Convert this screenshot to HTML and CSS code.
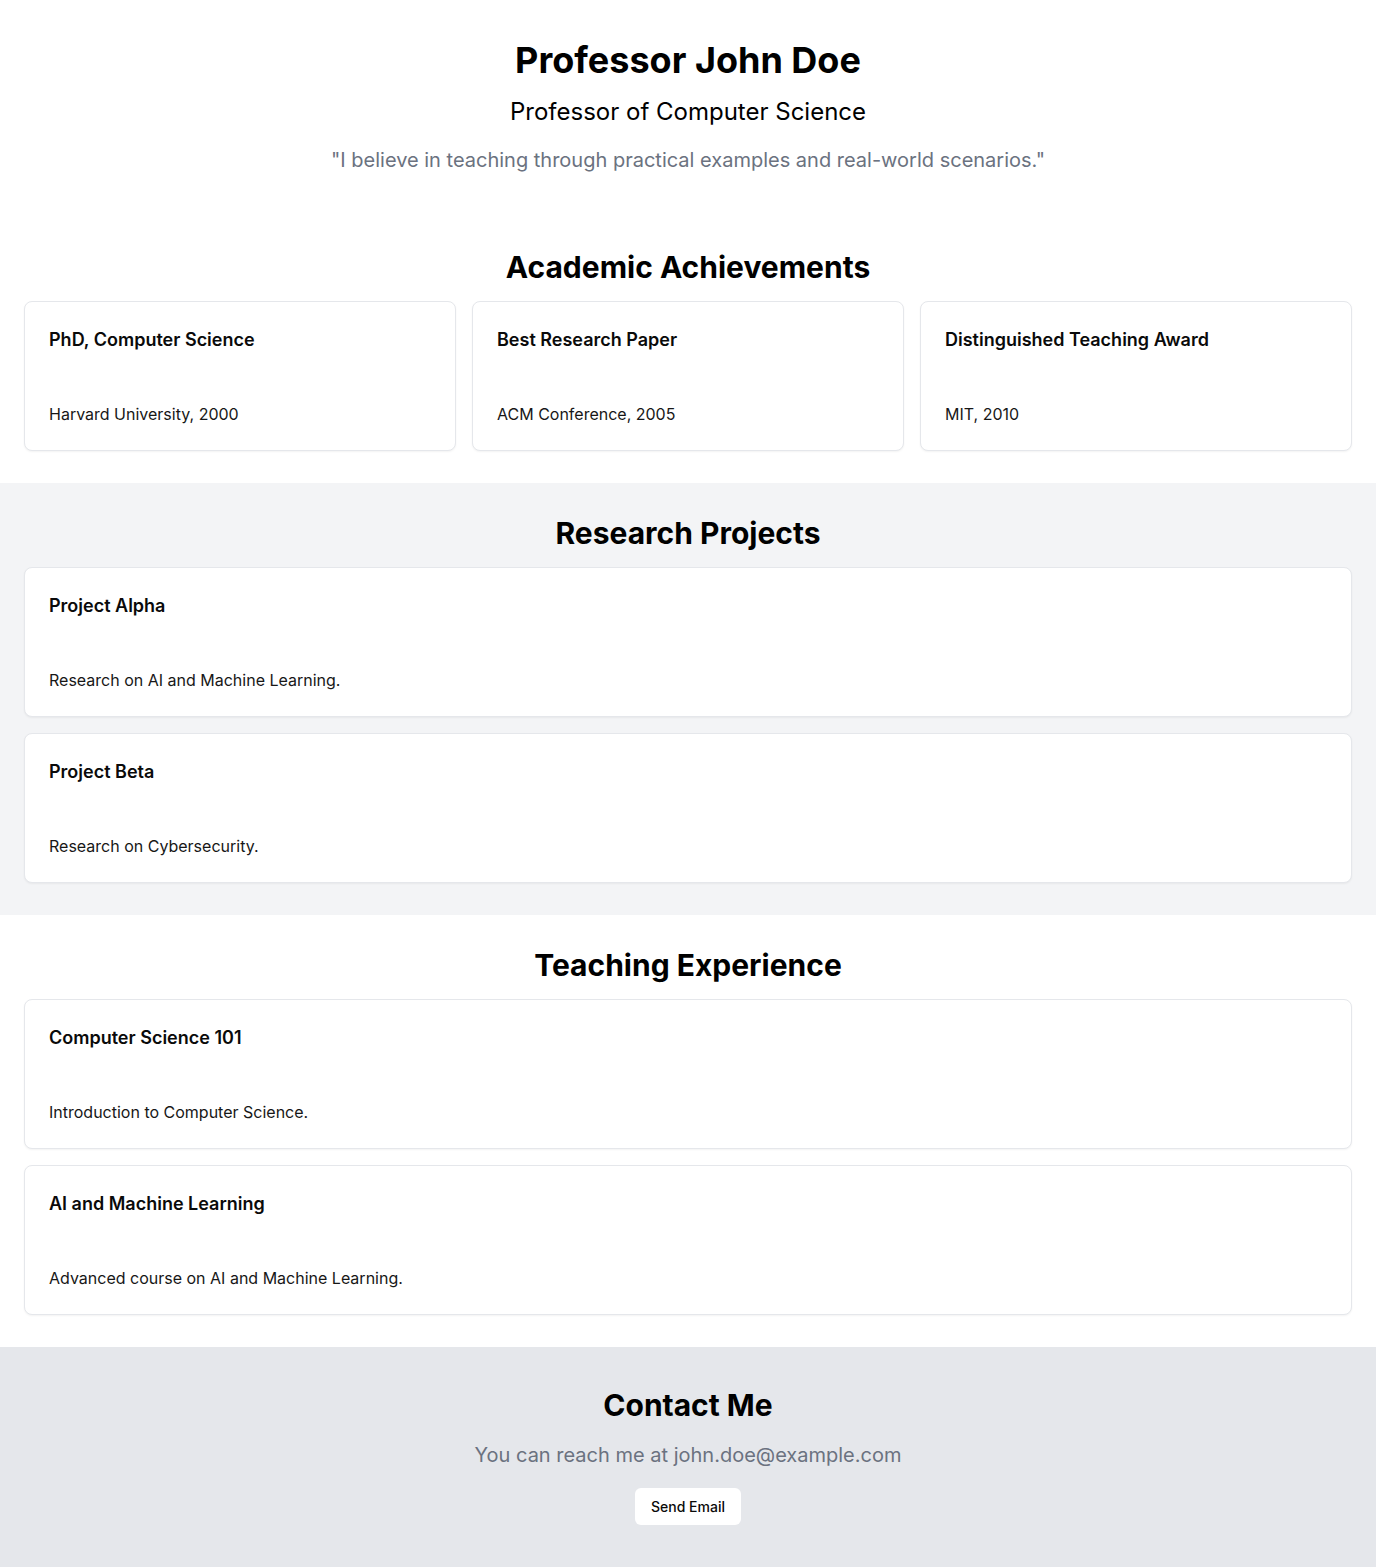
FILE: index.html
```html
<!DOCTYPE html>
<html lang="en">
<head>
<meta charset="utf-8">
<title>Professor John Doe</title>
<link rel="stylesheet" href="styles.css">
</head>
<body>
<header class="hero">
  <h1 class="hero-name">Professor John Doe</h1>
  <p class="hero-role">Professor of Computer Science</p>
  <p class="hero-quote">"I believe in teaching through practical examples and real-world scenarios."</p>
</header>

<section class="section">
  <h2 class="section-title">Academic Achievements</h2>
  <div class="grid-3">
    <div class="card">
      <h3 class="card-title">PhD, Computer Science</h3>
      <p class="card-text">Harvard University, 2000</p>
    </div>
    <div class="card">
      <h3 class="card-title">Best Research Paper</h3>
      <p class="card-text">ACM Conference, 2005</p>
    </div>
    <div class="card">
      <h3 class="card-title">Distinguished Teaching Award</h3>
      <p class="card-text">MIT, 2010</p>
    </div>
  </div>
</section>

<section class="section section-gray">
  <h2 class="section-title">Research Projects</h2>
  <div class="stack">
    <div class="card">
      <h3 class="card-title">Project Alpha</h3>
      <p class="card-text">Research on AI and Machine Learning.</p>
    </div>
    <div class="card">
      <h3 class="card-title">Project Beta</h3>
      <p class="card-text">Research on Cybersecurity.</p>
    </div>
  </div>
</section>

<section class="section">
  <h2 class="section-title">Teaching Experience</h2>
  <div class="stack">
    <div class="card">
      <h3 class="card-title">Computer Science 101</h3>
      <p class="card-text">Introduction to Computer Science.</p>
    </div>
    <div class="card">
      <h3 class="card-title">AI and Machine Learning</h3>
      <p class="card-text">Advanced course on AI and Machine Learning.</p>
    </div>
  </div>
</section>

<section class="contact">
  <h2 class="section-title contact-title">Contact Me</h2>
  <p class="contact-text">You can reach me at john.doe@example.com</p>
  <button class="btn" type="button">Send Email</button>
</section>
</body>
</html>
```

FILE: styles.css
```css
* { box-sizing: border-box; }
html, body {
  margin: 0;
  padding: 0;
  background: #ffffff;
  font-family: Inter, "Noto Sans", "Liberation Sans", sans-serif;
  color: #0a0a0a;
}
h1, h2, h3, p { margin: 0; }

.hero {
  padding: 40px 24px 43px;
  text-align: center;
}
.hero-name {
  font-size: 36px;
  line-height: 40px;
  font-weight: 700;
  color: #000;
}
.hero-role {
  margin-top: 16px;
  font-size: 24px;
  line-height: 32px;
  font-weight: 400;
  color: #000;
}
.hero-quote {
  margin-top: 18px;
  font-size: 20px;
  line-height: 28px;
  color: #6b7280;
}

.section {
  padding: 32px 24px;
}
.section-gray { background: #f3f4f6; }

.section-title {
  text-align: center;
  font-size: 30px;
  line-height: 36px;
  font-weight: 700;
  color: #000;
  margin-bottom: 16px;
}

.grid-3 {
  display: grid;
  grid-template-columns: repeat(3, 1fr);
  gap: 16px;
}
.stack {
  display: flex;
  flex-direction: column;
  gap: 16px;
}

.card {
  background: #fff;
  border: 1px solid #e5e7eb;
  border-radius: 8px;
  box-shadow: 0 1px 2px rgba(0, 0, 0, 0.05);
  padding: 24px;
  display: flex;
  flex-direction: column;
  gap: 48px;
}
.card-title {
  font-size: 18px;
  line-height: 28px;
  font-weight: 600;
  color: #0a0a0a;
}
.card-text {
  font-size: 16px;
  line-height: 24px;
  color: #171717;
}

.contact {
  background: #e5e7eb;
  padding: 40px 24px 43px;
  text-align: center;
  display: flex;
  flex-direction: column;
  align-items: center;
}
.contact-title { margin-bottom: 18px; }
.contact-text {
  font-size: 20px;
  line-height: 28px;
  color: #6b7280;
  margin-bottom: 19px;
}
.btn {
  font-family: Inter, "Noto Sans", "Liberation Sans", sans-serif;
  background: #fff;
  border: none;
  border-radius: 6px;
  height: 37px;
  padding: 0 16px;
  font-size: 14px;
  font-weight: 500;
  color: #0a0a0a;
  cursor: pointer;
}
```
